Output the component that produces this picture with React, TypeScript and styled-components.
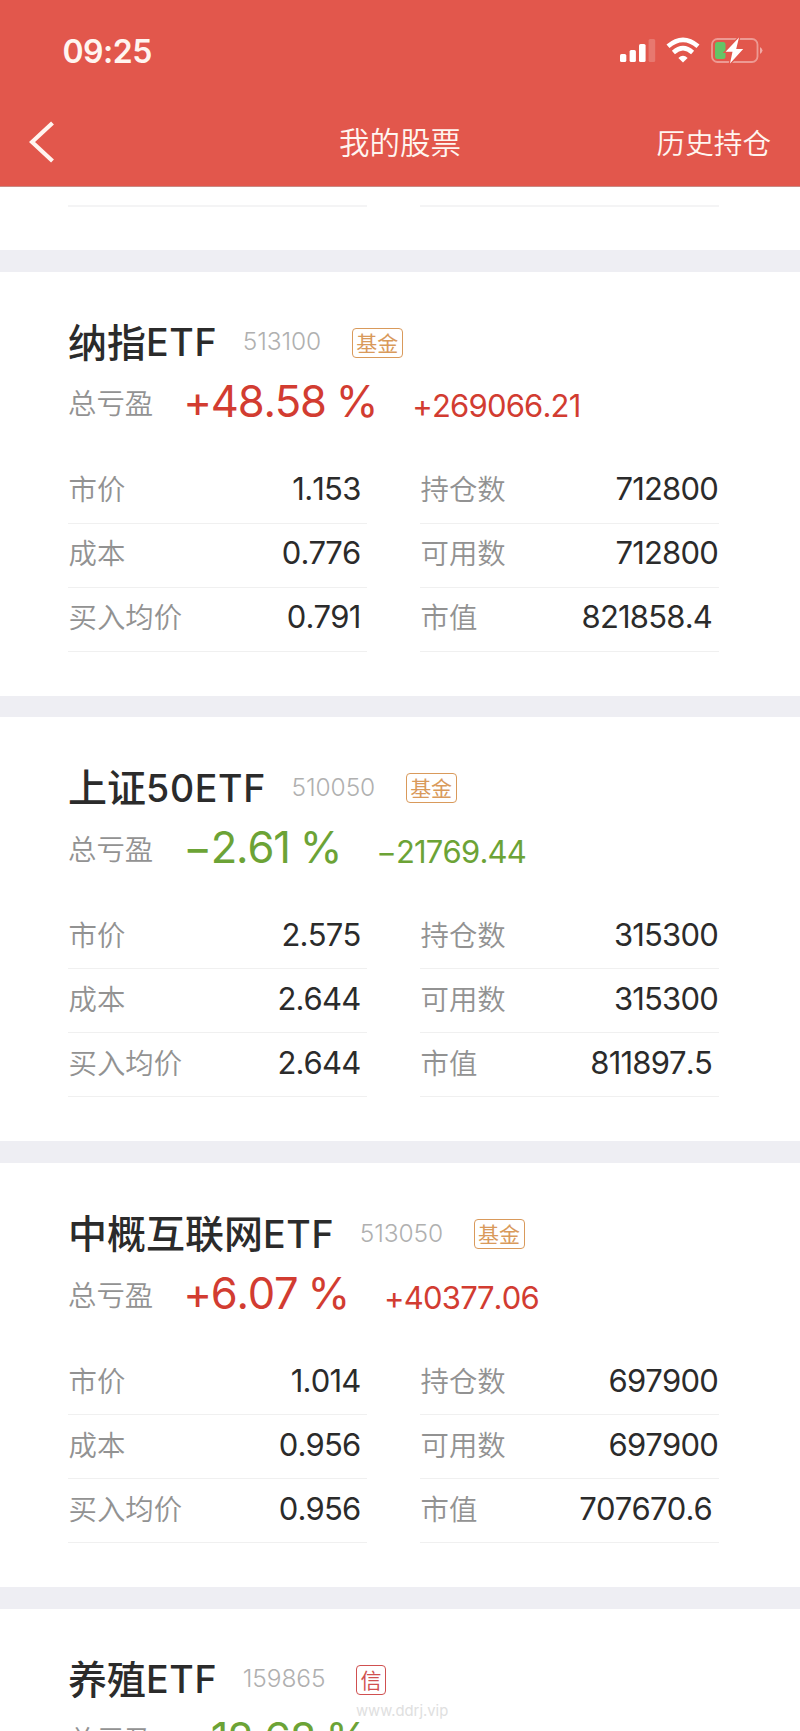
import React from 'react';
import styled, { createGlobalStyle } from 'styled-components';

const Global = createGlobalStyle`
  html, body { margin: 0; padding: 0; background: #fff; }
  body { overflow: hidden; }
  * { box-sizing: border-box; }
`;

const sans = `Inter, "Noto Sans CJK SC", sans-serif`;

const Screen = styled.div`
  width: 800px;
  height: 1731px;
  overflow: hidden;
  position: relative;
  display: flex;
  flex-direction: column;
  background: #fff;
  font-family: ${sans};
  color: #2b2b2b;
  white-space: nowrap;
`;

const Header = styled.header`
  flex: none;
  height: 187px;
  background: #e2574c;
  border-bottom: 1px solid #c98a84;
  color: #fff5f0;
`;

const StatusBar = styled.div`
  height: 100px;
  padding: 2px 37px 0 62.5px;
  display: flex;
  align-items: center;
  justify-content: space-between;
`;

const Clock = styled.span`
  font-size: 32px;
  font-weight: 600;
  letter-spacing: -0.5px;
`;

const StatusIcons = styled.svg`
  display: block;
  width: 144px;
  height: 30px;
`;

const NavBar = styled.nav`
  height: 84px;
  padding: 0 29px;
  display: grid;
  grid-template-columns: 1fr auto 1fr;
  align-items: center;
`;

const BackIcon = styled.svg`
  display: block;
  width: 26px;
  height: 42px;
`;

const NavTitle = styled.h1`
  margin: 0;
  padding-top: 2px;
  font-size: 30.5px;
  line-height: 40px;
  font-weight: 350;
`;

const NavAction = styled.span`
  justify-self: end;
  padding-top: 3px;
  font-size: 28.6px;
  line-height: 40px;
  font-weight: 350;
`;

const PreviousCard = styled.section`
  flex: none;
  height: 63px;
  padding: 18px 81px 0 68px;
  display: grid;
  grid-template-columns: 299px 299px;
  column-gap: 53px;
`;

const Rule = styled.div`
  height: 2px;
  background: #f4f4f5;
`;

const Divider = styled.div`
  flex: none;
  height: 21.7px;
  background: #eeeef3;
`;

const Card = styled.section`
  flex: none;
  height: 424px;
  padding: 47px 81px 0 68px;
`;

const TitleRow = styled.div`
  height: 48px;
  display: flex;
  align-items: center;
`;

const Name = styled.h2`
  margin: 0;
  display: flex;
  align-items: center;
  height: 48px;
  font-size: 39px;
  font-weight: 500;
`;

const Chinese = styled.span`
  padding-bottom: 6px;
`;

const Latin = styled.span`
  font-size: 37.5px;
  letter-spacing: 0.7px;
`;

const Code = styled.span`
  margin-left: 25.5px;
  padding-bottom: 3px;
  font-size: 24.5px;
  font-weight: 300;
  letter-spacing: -0.1px;
  color: #b0b0b0;
`;

const Tag = styled.span<{ $color: string }>`
  margin-left: 30.5px;
  height: 30px;
  padding: 1px 3.5px 0;
  display: flex;
  align-items: center;
  border: 1.5px solid ${(p) => p.$color};
  border-radius: 4px;
  color: ${(p) => p.$color};
  font-size: 21px;
  line-height: 27px;
`;

const ProfitRow = styled.div<{ $color: string }>`
  height: 59.5px;
  display: flex;
  align-items: flex-end;
  color: ${(p) => p.$color};
`;

const Label = styled.span`
  font-size: 28.4px;
  line-height: 40px;
  font-weight: 350;
  color: #929292;
`;

const ProfitLabel = styled(Label)`
  padding-bottom: 2px;
`;

const CellLabel = styled(Label)`
  padding-left: 0.5px;
  padding-top: 2px;
`;

const Percent = styled.span`
  margin-left: 30px;
  font-size: 43.5px;
  line-height: 50px;
  font-weight: 400;
  font-kerning: none;
  letter-spacing: -1.2px;
  word-spacing: -1px;
`;

const Amount = styled.span`
  margin-left: 35px;
  font-size: 31px;
  line-height: 40px;
  font-weight: 400;
  font-kerning: none;
  letter-spacing: -0.8px;
`;

const Grid = styled.div`
  margin-top: 33.5px;
  display: grid;
  grid-template-columns: 299px 299px;
  column-gap: 53px;
`;

const Cell = styled.div<{ $inset: number }>`
  height: 64px;
  padding: 0 ${(p) => p.$inset}px 4px 0;
  display: flex;
  align-items: center;
  justify-content: space-between;
  border-bottom: 1.5px solid #f0f0f0;
`;

const Value = styled.span`
  font-size: 31px;
  line-height: 40px;
  font-weight: 400;
  font-kerning: none;
  letter-spacing: -0.8px;
`;

const Watermark = styled.span`
  position: absolute;
  left: 356px;
  top: 1700px;
  font-size: 14.8px;
  line-height: 22px;
  color: #e0e0e0;
`;

type Holding = {
  cjk: string;
  latin: string;
  code: string;
  tag: string;
  percent: string;
  amount: string;
  rows: string[][];
};

const holdings: Holding[] = [
  { cjk: '纳指', latin: 'ETF', code: '513100', tag: '基金', percent: '+48.58 %', amount: '+269066.21',
    rows: [['1.153', '712800'], ['0.776', '712800'], ['0.791', '821858.4']] },
  { cjk: '上证', latin: '50ETF', code: '510050', tag: '基金', percent: '−2.61 %', amount: '−21769.44',
    rows: [['2.575', '315300'], ['2.644', '315300'], ['2.644', '811897.5']] },
  { cjk: '中概互联网', latin: 'ETF', code: '513050', tag: '基金', percent: '+6.07 %', amount: '+40377.06',
    rows: [['1.014', '697900'], ['0.956', '697900'], ['0.956', '707670.6']] },
  { cjk: '养殖', latin: 'ETF', code: '159865', tag: '信', percent: '−12.68 %', amount: '', rows: [] },
];

const labels = [['市价', '持仓数'], ['成本', '可用数'], ['买入均价', '市值']];

function HoldingCard({ h }: { h: Holding }) {
  return (
    <Card>
      <TitleRow>
        <Name><Chinese>{h.cjk}</Chinese><Latin>{h.latin}</Latin></Name>
        <Code>{h.code}</Code>
        <Tag $color={h.tag === '信' ? '#d05050' : '#d99a5b'}>{h.tag}</Tag>
      </TitleRow>
      <ProfitRow $color={h.percent[0] === '+' ? '#d23c31' : '#6ca336'}>
        <ProfitLabel>总亏盈</ProfitLabel>
        <Percent>{h.percent}</Percent>
        <Amount>{h.amount}</Amount>
      </ProfitRow>
      <Grid>
        {h.rows.map((row, i) =>
          row.map((value, j) => (
            <Cell key={`${i}-${j}`} $inset={j === 0 ? 6.5 : i === 2 ? 7 : 1}>
              <CellLabel>{labels[i][j]}</CellLabel>
              <Value>{value}</Value>
            </Cell>
          )),
        )}
      </Grid>
    </Card>
  );
}

export default function App() {
  return (
    <Screen>
      <Global />
      <Header>
        <StatusBar>
          <Clock>09:25</Clock>
          <StatusIcons viewBox="619 36 144 30">
            <g fill="#fff">
              <rect x="620" y="54" width="6.3" height="8" rx="1.6" />
              <rect x="629.6" y="50" width="6.3" height="12" rx="1.6" />
              <rect x="639" y="44" width="6.6" height="18" rx="1.6" />
              <rect x="648.6" y="39" width="6.6" height="23" rx="1.6" opacity=".2" />
              <path d="M683 62.6L678.4 58Q683 53.6 687.6 58Z" />
            </g>
            <g fill="none" stroke="#fff" strokeWidth="4.6">
              <path d="M668 46.3Q683 33.5 698 46.3" />
              <path d="M673.4 52.4Q683 44 692.6 52.4" />
            </g>
            <rect x="712" y="39" width="45.5" height="23" rx="5.5" fill="none" stroke="#fff" strokeOpacity=".4" strokeWidth="1.8" />
            <path d="M760 47q5 3.5 0 7z" fill="#fff" fillOpacity=".5" />
            <rect x="715" y="42" width="10.5" height="17" rx="2.5" fill="#65c466" />
            <path d="M739 37.5L725.6 51.8H732.5L730 63.5L743.2 49H736.2Z" fill="#fff" stroke="#e2574c" strokeWidth="2.5" paintOrder="stroke" />
          </StatusIcons>
        </StatusBar>
        <NavBar>
          <BackIcon viewBox="0 0 26 42">
            <path d="M23.5 2L3 21L23.5 40" fill="none" stroke="#fff5f0" strokeWidth="4.2" />
          </BackIcon>
          <NavTitle>我的股票</NavTitle>
          <NavAction>历史持仓</NavAction>
        </NavBar>
      </Header>
      <PreviousCard>
        <Rule />
        <Rule />
      </PreviousCard>
      {holdings.map((h) => (
        <React.Fragment key={h.code}>
          <Divider />
          <HoldingCard h={h} />
        </React.Fragment>
      ))}
      <Watermark>www.ddrj.vip</Watermark>
    </Screen>
  );
}
